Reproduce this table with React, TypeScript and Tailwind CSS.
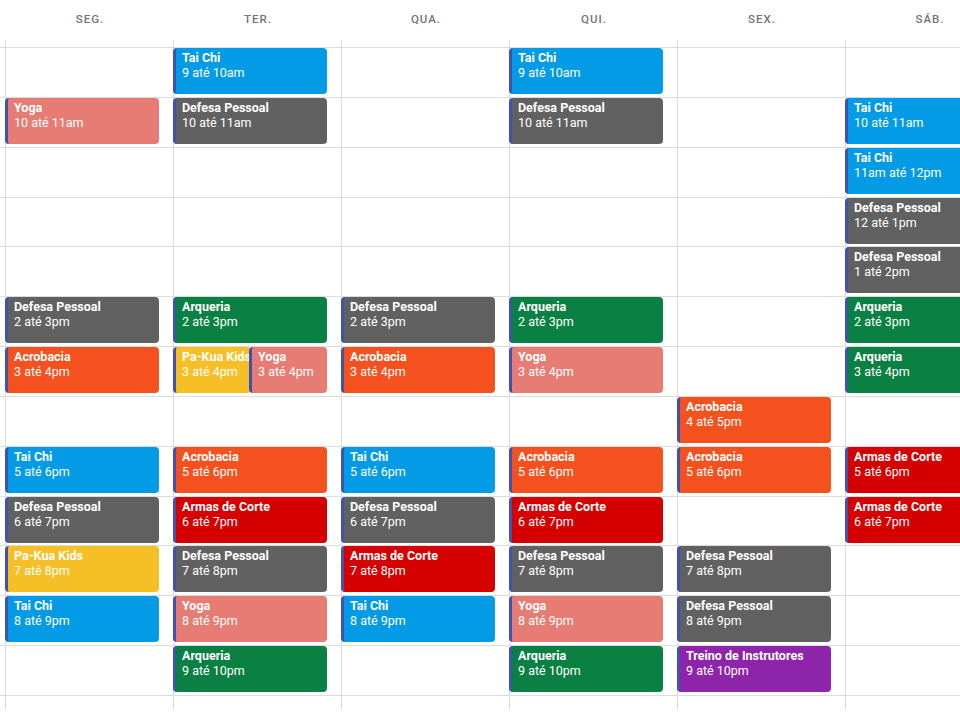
import { Fragment } from "react";

type Ev = { t: string; h: string; c: string };

const colors: Record<string, string> = {
  tai: "bg-[#039be5]",
  def: "bg-[#616161]",
  yoga: "bg-[#e67c73]",
  arq: "bg-[#0b8043]",
  acro: "bg-[#f4511e]",
  kids: "bg-[#f6bf26]",
  armas: "bg-[#d50000]",
  treino: "bg-[#8e24aa]",
};

const days = ["SEG.", "TER.", "QUA.", "QUI.", "SEX.", "SÁB."];

// [coluna, linha] -> eventos
const events: Record<string, Ev[]> = {
  "0-1": [{ t: "Yoga", h: "10 até 11am", c: "yoga" }],
  "0-5": [{ t: "Defesa Pessoal", h: "2 até 3pm", c: "def" }],
  "0-6": [{ t: "Acrobacia", h: "3 até 4pm", c: "acro" }],
  "0-8": [{ t: "Tai Chi", h: "5 até 6pm", c: "tai" }],
  "0-9": [{ t: "Defesa Pessoal", h: "6 até 7pm", c: "def" }],
  "0-10": [{ t: "Pa-Kua Kids", h: "7 até 8pm", c: "kids" }],
  "0-11": [{ t: "Tai Chi", h: "8 até 9pm", c: "tai" }],

  "1-0": [{ t: "Tai Chi", h: "9 até 10am", c: "tai" }],
  "1-1": [{ t: "Defesa Pessoal", h: "10 até 11am", c: "def" }],
  "1-5": [{ t: "Arqueria", h: "2 até 3pm", c: "arq" }],
  "1-6": [
    { t: "Pa-Kua Kids", h: "3 até 4pm", c: "kids" },
    { t: "Yoga", h: "3 até 4pm", c: "yoga" },
  ],
  "1-8": [{ t: "Acrobacia", h: "5 até 6pm", c: "acro" }],
  "1-9": [{ t: "Armas de Corte", h: "6 até 7pm", c: "armas" }],
  "1-10": [{ t: "Defesa Pessoal", h: "7 até 8pm", c: "def" }],
  "1-11": [{ t: "Yoga", h: "8 até 9pm", c: "yoga" }],
  "1-12": [{ t: "Arqueria", h: "9 até 10pm", c: "arq" }],

  "2-5": [{ t: "Defesa Pessoal", h: "2 até 3pm", c: "def" }],
  "2-6": [{ t: "Acrobacia", h: "3 até 4pm", c: "acro" }],
  "2-8": [{ t: "Tai Chi", h: "5 até 6pm", c: "tai" }],
  "2-9": [{ t: "Defesa Pessoal", h: "6 até 7pm", c: "def" }],
  "2-10": [{ t: "Armas de Corte", h: "7 até 8pm", c: "armas" }],
  "2-11": [{ t: "Tai Chi", h: "8 até 9pm", c: "tai" }],

  "3-0": [{ t: "Tai Chi", h: "9 até 10am", c: "tai" }],
  "3-1": [{ t: "Defesa Pessoal", h: "10 até 11am", c: "def" }],
  "3-5": [{ t: "Arqueria", h: "2 até 3pm", c: "arq" }],
  "3-6": [{ t: "Yoga", h: "3 até 4pm", c: "yoga" }],
  "3-8": [{ t: "Acrobacia", h: "5 até 6pm", c: "acro" }],
  "3-9": [{ t: "Armas de Corte", h: "6 até 7pm", c: "armas" }],
  "3-10": [{ t: "Defesa Pessoal", h: "7 até 8pm", c: "def" }],
  "3-11": [{ t: "Yoga", h: "8 até 9pm", c: "yoga" }],
  "3-12": [{ t: "Arqueria", h: "9 até 10pm", c: "arq" }],

  "4-7": [{ t: "Acrobacia", h: "4 até 5pm", c: "acro" }],
  "4-8": [{ t: "Acrobacia", h: "5 até 6pm", c: "acro" }],
  "4-10": [{ t: "Defesa Pessoal", h: "7 até 8pm", c: "def" }],
  "4-11": [{ t: "Defesa Pessoal", h: "8 até 9pm", c: "def" }],
  "4-12": [{ t: "Treino de Instrutores", h: "9 até 10pm", c: "treino" }],

  "5-1": [{ t: "Tai Chi", h: "10 até 11am", c: "tai" }],
  "5-2": [{ t: "Tai Chi", h: "11am até 12pm", c: "tai" }],
  "5-3": [{ t: "Defesa Pessoal", h: "12 até 1pm", c: "def" }],
  "5-4": [{ t: "Defesa Pessoal", h: "1 até 2pm", c: "def" }],
  "5-5": [{ t: "Arqueria", h: "2 até 3pm", c: "arq" }],
  "5-6": [{ t: "Arqueria", h: "3 até 4pm", c: "arq" }],
  "5-8": [{ t: "Armas de Corte", h: "5 até 6pm", c: "armas" }],
  "5-9": [{ t: "Armas de Corte", h: "6 até 7pm", c: "armas" }],
};

function EventCard({ ev, narrow, over }: { ev: Ev; narrow?: boolean; over?: boolean }) {
  return (
    <div
      className={`h-[46px] shrink-0 overflow-hidden rounded-[4px] border-l-[3px] border-[#3f51b5] pl-[6px] pt-[2px] text-[12.5px] leading-[15px] text-white ${colors[ev.c]} ${
        narrow ? "w-[78px]" : "w-[154px]"
      } ${over ? "relative z-10 -ml-[2px]" : "-ml-px"}`}
    >
      <div className="whitespace-nowrap font-bold">{ev.t}</div>
      <div className="whitespace-nowrap">{ev.h}</div>
    </div>
  );
}

function Cell({ col, row }: { col: number; row: number }) {
  const list = events[`${col}-${row}`] || [];
  const split = list.length > 1;
  return (
    <div className="flex h-[49.85px] border-l border-t border-[#dadce0]">
      {list.map((ev, i) => (
        <EventCard key={i} ev={ev} narrow={split} over={split && i > 0} />
      ))}
    </div>
  );
}

export default function App() {
  const rows = Array.from({ length: 13 }, (_, i) => i);
  return (
    <div className="h-[720px] w-[960px] overflow-hidden bg-white font-['Roboto',sans-serif]">
      <div className="flex h-[40px] pl-[6px]">
        {days.map((d) => (
          <div
            key={d}
            className="w-[168px] shrink-0 pt-[12px] text-center text-[11.5px] font-medium leading-[14px] tracking-[1px] text-[#70757a]"
          >
            {d}
          </div>
        ))}
      </div>

      <div className="grid w-[1013px] grid-cols-[5px_repeat(6,168px)]">
        <div className="h-[7px]" />
        {days.map((d) => (
          <div key={d} className="h-[7px] border-l border-[#dadce0]" />
        ))}

        {rows.map((r) => (
          <Fragment key={r}>
            <div className="h-[49.85px] border-t border-[#dadce0]" />
            {days.map((_, c) => (
              <Cell key={`${c}-${r}`} col={c} row={r} />
            ))}
          </Fragment>
        ))}

        <div className="h-[15px] border-t border-[#dadce0]" />
        {days.map((d) => (
          <div key={d} className="h-[15px] border-l border-t border-[#dadce0]" />
        ))}
      </div>
    </div>
  );
}
